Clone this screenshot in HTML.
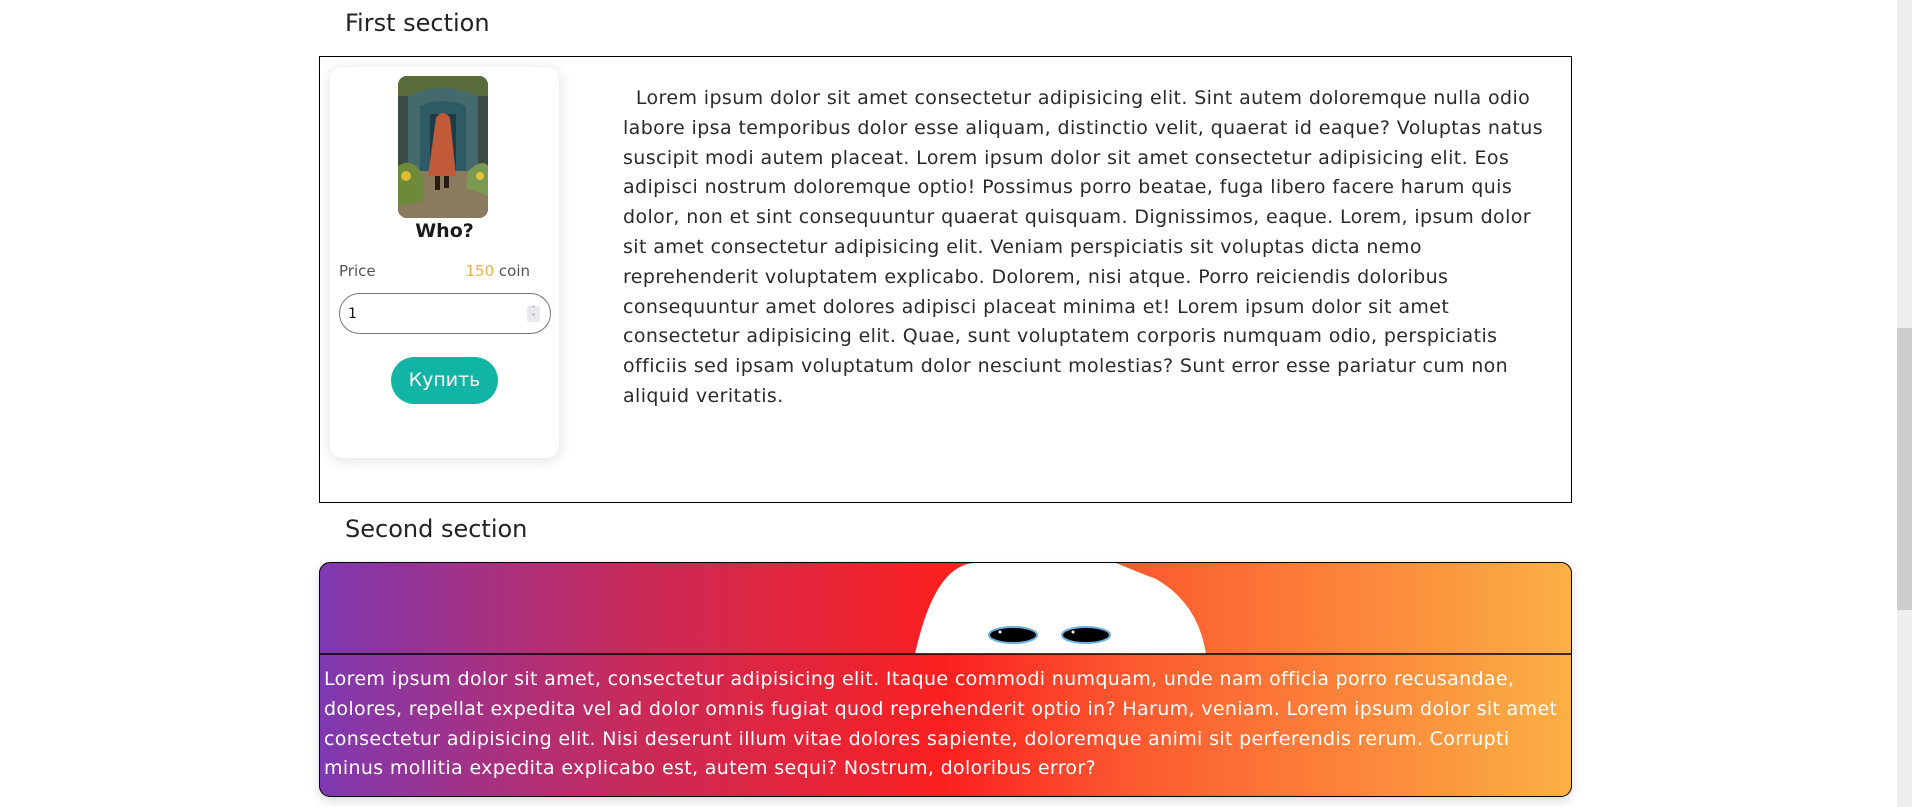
<!DOCTYPE html>
<html><head><meta charset="utf-8"><style>
html,body{margin:0;padding:0;background:#fff;width:1912px;height:807px;overflow:hidden;font-family:"DejaVu Sans","Liberation Sans",sans-serif;color:#222}
.a{position:absolute}
.h{font-size:24px;color:#222;left:345px;line-height:30px}
.box{left:319px;top:56px;width:1251px;height:445px;border:1px solid #000}
.card{left:330px;top:67px;width:229px;height:391px;background:#fff;border-radius:13px;box-shadow:0 2px 14px rgba(0,0,0,.13)}
.p{left:623px;top:84px;font-size:19px;letter-spacing:0.4px;line-height:29.8px;color:#2a2a2a;white-space:nowrap}
.g{left:319px;top:562px;width:1251px;height:233px;border:1px solid #000;border-radius:11px;overflow:hidden;background:linear-gradient(90deg,#7f39b1 0%,#c82a5a 25%,#fb2020 50%,#fc5a30 65%,#fbb045 100%);box-shadow:0 4px 10px rgba(0,0,0,.15)}
.t{left:4px;top:102px;font-size:19px;letter-spacing:0.35px;line-height:29.8px;color:#fff;white-space:nowrap}
</style></head><body>
<div class="a h" style="top:8px">First section</div>
<div class="a box"></div>
<div class="a card"></div>
<svg class="a" style="left:398px;top:76px" width="90" height="142" viewBox="0 0 90 142">
<defs><clipPath id="c"><rect width="90" height="142" rx="9"/></clipPath></defs>
<g clip-path="url(#c)">
<rect width="90" height="142" fill="#3c4a44"/>
<rect x="0" y="0" width="90" height="20" fill="#5a6a3a"/>
<path d="M10 20 Q45 4 80 20 L80 100 L10 100Z" fill="#456a6e"/>
<path d="M22 30 Q45 20 68 30 L68 100 L22 100Z" fill="#2e5a66"/>
<rect x="32" y="38" width="26" height="62" fill="#1e3c48"/>
<path d="M0 95 L90 95 L90 142 L0 142Z" fill="#8a7a5e"/>
<path d="M0 90 Q15 80 25 100 L25 125 L0 130Z" fill="#6c8a3a"/>
<path d="M70 95 Q85 82 90 90 L90 120 L68 112Z" fill="#7a9a50"/>
<circle cx="8" cy="100" r="5" fill="#e3b832"/><circle cx="82" cy="100" r="4" fill="#e3c23a"/>
<path d="M38 42 Q45 32 52 42 L58 100 L30 100Z" fill="#c05a38"/>
<rect x="37" y="100" width="5" height="14" fill="#2a1a14"/><rect x="46" y="100" width="5" height="12" fill="#2a1a14"/>
</g></svg>
<div class="a" style="left:330px;width:229px;top:220px;text-align:center;font-weight:bold;font-size:19px;color:#1a1a1a">Who?</div>
<div class="a" style="left:339px;top:262px;font-size:15px;color:#555">Price</div>
<div class="a" style="left:430px;width:100px;text-align:right;top:262px;font-size:15px;color:#555"><span style="color:#f5b03a">150</span> coin</div>
<div class="a" style="left:339px;top:293px;width:212px;height:41px;border:1px solid #777;border-radius:21px;box-sizing:border-box"></div>
<div class="a" style="left:348px;top:306px;font-size:14px;color:#111">1</div>
<div class="a" style="left:527px;top:306px;width:13px;height:16px;background:#e8e8ee;border-radius:2px;font-size:8px;color:#888;text-align:center;line-height:8px">˄<br>˅</div>
<div class="a" style="left:391px;top:357px;width:107px;height:47px;border-radius:24px;background:#12b5a5;color:#fff;font-size:19px;text-align:center;line-height:47px">Купить</div>
<div class="a p">&nbsp; Lorem ipsum dolor sit amet consectetur adipisicing elit. Sint autem doloremque nulla odio<br>labore ipsa temporibus dolor esse aliquam, distinctio velit, quaerat id eaque? Voluptas natus<br>suscipit modi autem placeat. Lorem ipsum dolor sit amet consectetur adipisicing elit. Eos<br>adipisci nostrum doloremque optio! Possimus porro beatae, fuga libero facere harum quis<br>dolor, non et sint consequuntur quaerat quisquam. Dignissimos, eaque. Lorem, ipsum dolor<br>sit amet consectetur adipisicing elit. Veniam perspiciatis sit voluptas dicta nemo<br>reprehenderit voluptatem explicabo. Dolorem, nisi atque. Porro reiciendis doloribus<br>consequuntur amet dolores adipisci placeat minima et! Lorem ipsum dolor sit amet<br>consectetur adipisicing elit. Quae, sunt voluptatem corporis numquam odio, perspiciatis<br>officiis sed ipsam voluptatum dolor nesciunt molestias? Sunt error esse pariatur cum non<br>aliquid veritatis.</div>
<div class="a h" style="top:514px">Second section</div>
<div class="a g">
<svg class="a" style="left:0;top:0" width="1251" height="92">
<path d="M595 91 Q615 0 656 0 L796 0 Q820 10 836 16 Q878 40 886 91Z" fill="#fff"/>
<ellipse cx="693" cy="72" rx="24" ry="8" fill="#000" stroke="#6ab0e0" stroke-width="2"/>
<ellipse cx="766" cy="72" rx="24" ry="8" fill="#000" stroke="#6ab0e0" stroke-width="2"/>
<circle cx="680" cy="69" r="1.5" fill="#fff"/><circle cx="753" cy="69" r="1.5" fill="#fff"/>
<line x1="0" y1="91" x2="1251" y2="91" stroke="#000" stroke-width="1.5"/>
</svg>
<div class="a t">Lorem ipsum dolor sit amet, consectetur adipisicing elit. Itaque commodi numquam, unde nam officia porro recusandae,<br>dolores, repellat expedita vel ad dolor omnis fugiat quod reprehenderit optio in? Harum, veniam. Lorem ipsum dolor sit amet<br>consectetur adipisicing elit. Nisi deserunt illum vitae dolores sapiente, doloremque animi sit perferendis rerum. Corrupti<br>minus mollitia expedita explicabo est, autem sequi? Nostrum, doloribus error?</div>
</div>
<div class="a" style="left:1897px;top:0;width:15px;height:807px;background:#efefef"></div>
<div class="a" style="left:1897px;top:328px;width:15px;height:282px;background:#cdcdcd"></div>
</body></html>
